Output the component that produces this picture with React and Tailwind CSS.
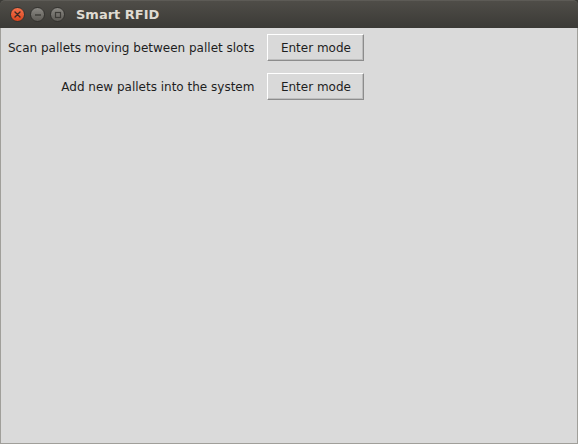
export default function App() {
  const rows = [
    'Scan pallets moving between pallet slots',
    'Add new pallets into the system',
  ];

  return (
    <div className="w-[578px] h-[444px] flex flex-col bg-[#3c3b37] overflow-hidden" style={{ fontFamily: '"DejaVu Sans", sans-serif' }}>
      {/* Title bar */}
      <div className="h-[28px] flex items-center shrink-0 bg-gradient-to-b from-[#4f4d48] to-[#3b3a36] border-t border-[#5d5b56] rounded-t-[5px]">
        <div className="flex items-center gap-[5px] pl-[10px]">
          <div className="w-[15px] h-[15px] rounded-full bg-gradient-to-b from-[#f5714b] to-[#d8441c] border border-[#33322f] flex items-center justify-center">
            <svg width="7" height="7" viewBox="0 0 7 7" stroke="#3a2a24" strokeWidth="1.4" strokeLinecap="round">
              <path d="M1 1L6 6M6 1L1 6" />
            </svg>
          </div>
          <div className="w-[15px] h-[15px] rounded-full bg-gradient-to-b from-[#8a8883] to-[#5e5c57] border border-[#33322f] flex items-center justify-center">
            <svg width="8" height="8" viewBox="0 0 8 8" stroke="#3c3b37" strokeWidth="1.4">
              <path d="M1 4H7" />
            </svg>
          </div>
          <div className="w-[15px] h-[15px] rounded-full bg-gradient-to-b from-[#8a8883] to-[#5e5c57] border border-[#33322f] flex items-center justify-center">
            <svg width="8" height="8" viewBox="0 0 8 8" fill="none" stroke="#3c3b37" strokeWidth="1.2">
              <rect x="1.5" y="1.5" width="5" height="5" />
            </svg>
          </div>
        </div>
        <span className="ml-[11px] text-[13px] font-bold text-[#dfdbd2]">Smart RFID</span>
      </div>

      {/* Body */}
      <div className="flex-1 bg-[#dadada] border-x border-b border-[#a09f9a] pt-[6px]">
        <div className="grid grid-cols-[auto_auto] justify-start items-center gap-x-[13px] gap-y-[12px] pl-[7px]">
          {rows.map((label) => (
            <div key={label} className="contents">
              <span className="text-right text-[12px] text-[#1e1e1e]">{label}</span>
              <button className="w-[97px] h-[27px] bg-[#d9d9d9] text-[12px] text-[#1e1e1e] border border-t-white border-l-white border-r-[#8c8c8c] border-b-[#8c8c8c] shadow-[inset_-1px_-1px_0_#bdbdbd]">
                Enter mode
              </button>
            </div>
          ))}
        </div>
      </div>
    </div>
  );
}
